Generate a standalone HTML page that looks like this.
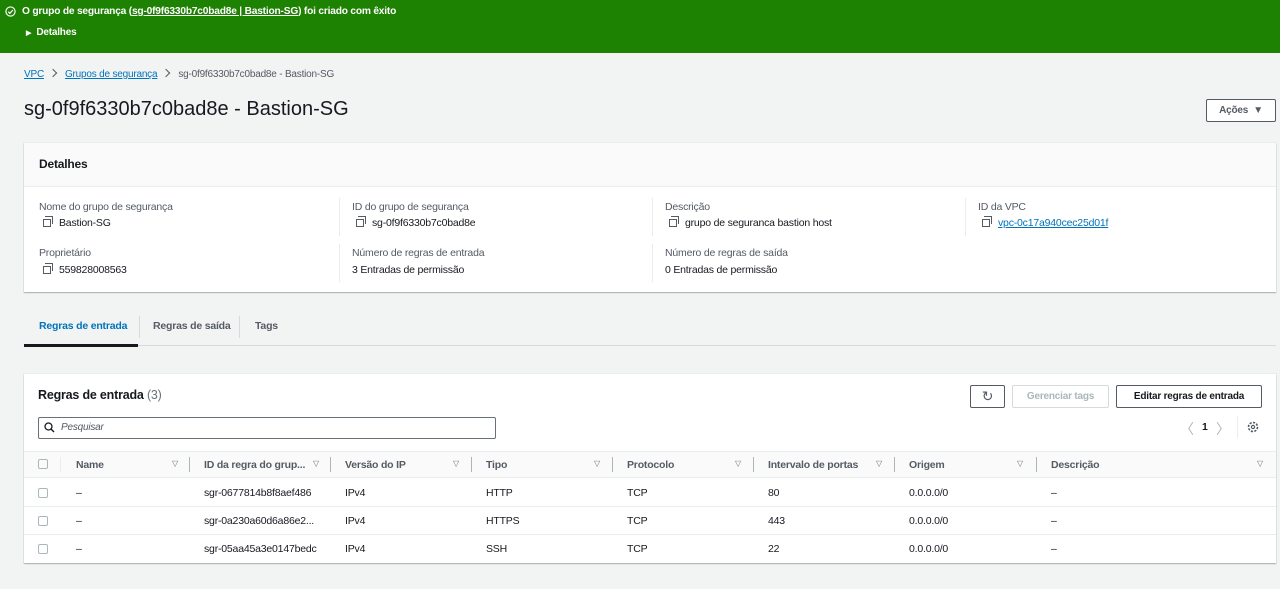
<!DOCTYPE html>
<html><head><meta charset="utf-8"><style>
*{box-sizing:border-box;margin:0;padding:0}
body{width:1280px;height:589px;background:#f2f3f3;font-family:"Liberation Sans",sans-serif;color:#16191f;font-size:10.5px;position:relative;overflow:hidden;letter-spacing:-0.2px}
.a{position:absolute;white-space:nowrap}
.banner{position:absolute;left:0;top:0;width:1280px;height:53px;background:#1d8102;color:#fff;font-weight:bold;font-size:10px}
a{color:#0073bb;text-decoration:underline}
.panel{position:absolute;background:#fff;box-shadow:0 1px 1px rgba(0,22,40,.3),0 0 0 1px #eaeded}
.lbl{color:#545b64}
.cp{display:inline-block;width:8px;height:8px;border:1.3px solid #545b64;position:relative;margin-right:8px;vertical-align:-1px}
.cp:after{content:"";position:absolute;left:1px;top:-4px;width:7px;height:7px;border-top:1.3px solid #545b64;border-right:1.3px solid #545b64}
.vsep{position:absolute;width:1px;background:#eaeded}
.btn{position:absolute;border:1px solid #545b64;background:#fff;font-weight:bold;color:#545b64;text-align:center;border-radius:2px;font-size:10px}
.cb{position:absolute;width:10px;height:10px;border:1px solid #aab7b8;border-radius:2px}
.th{position:absolute;font-weight:bold;color:#545b64;top:459px}
.tri{position:absolute;top:459px;color:#687078;font-size:8px}
.cs{position:absolute;top:457px;width:1px;height:15px;background:#aab7b8}
.row{position:absolute;left:24px;width:1252px;height:1px;background:#eaeded}
.chev{display:inline-block;width:6px;height:6px;border-top:1.3px solid #545b64;border-right:1.3px solid #545b64;transform:rotate(45deg);margin:0 9px 1px 6px}
</style></head><body>
<div class="banner">
<svg class="a" style="left:5px;top:6px" width="11" height="11" viewBox="0 0 12 12"><circle cx="6" cy="6" r="5" fill="none" stroke="#fff" stroke-width="1.3"/><path d="M3.5 6.2l1.8 1.8 3.3-3.6" fill="none" stroke="#fff" stroke-width="1.3"/></svg>
<div class="a" style="left:22px;top:6px;font-size:10.2px">O grupo de segurança (<span style="text-decoration:underline">sg-0f9f6330b7c0bad8e | Bastion-SG</span>) foi criado com êxito</div>
<div class="a" style="left:26px;top:27px"><span style="font-size:7px">▶</span>&nbsp; Detalhes</div>
</div>
<div class="a" style="left:24px;top:69px;font-size:10px"><a>VPC</a><span class="chev"></span><a>Grupos de segurança</a><span class="chev"></span><span style="color:#545b64">sg-0f9f6330b7c0bad8e - Bastion-SG</span></div>
<div class="a" style="left:24px;top:98px;font-size:20px;letter-spacing:0">sg-0f9f6330b7c0bad8e - Bastion-SG</div>
<div class="btn" style="left:1206px;top:99px;width:70px;height:23px;line-height:21px">Ações &nbsp;▼</div>

<div class="panel" style="left:24px;top:143px;width:1252px;height:149px">
<div style="height:44px;background:#fafafa;border-bottom:1px solid #eaeded"></div>
<div class="a" style="left:15px;top:14px;font-weight:bold;font-size:12px">Detalhes</div>
<div class="a lbl" style="left:15px;top:58px">Nome do grupo de segurança</div>
<div class="a" style="left:19px;top:74px"><span class="cp"></span>Bastion-SG</div>
<div class="a lbl" style="left:15px;top:104px">Proprietário</div>
<div class="a" style="left:19px;top:121px"><span class="cp"></span>559828008563</div>
<div class="vsep" style="left:315px;top:55px;height:38px"></div><div class="vsep" style="left:315px;top:101px;height:38px"></div>
<div class="a lbl" style="left:328px;top:58px">ID do grupo de segurança</div>
<div class="a" style="left:332px;top:74px"><span class="cp"></span>sg-0f9f6330b7c0bad8e</div>
<div class="a lbl" style="left:328px;top:104px">Número de regras de entrada</div>
<div class="a" style="left:328px;top:121px">3 Entradas de permissão</div>
<div class="vsep" style="left:628px;top:55px;height:38px"></div><div class="vsep" style="left:628px;top:101px;height:38px"></div>
<div class="a lbl" style="left:641px;top:58px">Descrição</div>
<div class="a" style="left:645px;top:74px"><span class="cp"></span>grupo de seguranca bastion host</div>
<div class="a lbl" style="left:641px;top:104px">Número de regras de saída</div>
<div class="a" style="left:641px;top:121px">0 Entradas de permissão</div>
<div class="vsep" style="left:941px;top:55px;height:38px"></div>
<div class="a lbl" style="left:954px;top:58px">ID da VPC</div>
<div class="a" style="left:958px;top:74px"><span class="cp"></span><a>vpc-0c17a940cec25d01f</a></div>
</div>

<div class="a" style="left:24px;top:345px;width:1252px;height:1px;background:#d5dbdb"></div>
<div class="a" style="left:24px;top:344px;width:114px;height:3px;background:#16191f"></div>
<div class="a" style="left:39px;top:320px;font-weight:bold;color:#0073bb">Regras de entrada</div>
<div class="vsep" style="left:139px;top:316px;height:22px;background:#d5dbdb"></div>
<div class="a" style="left:153px;top:320px;font-weight:bold;color:#545b64">Regras de saída</div>
<div class="vsep" style="left:239px;top:316px;height:22px;background:#d5dbdb"></div>
<div class="a" style="left:255px;top:320px;font-weight:bold;color:#545b64">Tags</div>

<div class="panel" style="left:24px;top:374px;width:1252px;height:189px"></div>
<div class="a" style="left:24px;top:451px;width:1252px;height:27px;background:#fafafa;border-top:1px solid #eaeded;border-bottom:1px solid #eaeded"></div>
<div class="a" style="left:38px;top:388px;font-weight:bold;font-size:12.5px">Regras de entrada <span style="font-weight:normal;color:#687078">(3)</span></div>
<div class="btn" style="left:970px;top:385px;width:35px;height:23px;line-height:20px;font-size:14px;font-weight:normal">↻</div>
<div class="btn" style="left:1012px;top:385px;width:97px;height:23px;line-height:21px;border-color:#d5dbdb;color:#aab7b8">Gerenciar tags</div>
<div class="btn" style="left:1116px;top:385px;width:146px;height:23px;line-height:21px;color:#16191f">Editar regras de entrada</div>
<div class="a" style="left:38px;top:417px;width:458px;height:22px;border:1px solid #687078;border-radius:2px;background:#fff"></div>
<svg class="a" style="left:44px;top:422px" width="11" height="11" viewBox="0 0 11 11"><circle cx="4.5" cy="4.5" r="3.5" fill="none" stroke="#16191f" stroke-width="1.3"/><path d="M7 7l3 3" stroke="#16191f" stroke-width="1.4"/></svg>
<div class="a" style="left:61px;top:422px;font-style:italic;color:#545b64;font-size:10px">Pesquisar</div>
<div class="a" style="left:1180px;top:419px;color:#aab7b8;font-size:14px">〈</div>
<div class="a" style="left:1202px;top:421px;font-weight:bold">1</div>
<div class="a" style="left:1216px;top:419px;color:#aab7b8;font-size:14px">〉</div>
<div class="vsep" style="left:1237px;top:416px;height:22px"></div>
<svg class="a" style="left:1247px;top:421px" width="12" height="12" viewBox="0 0 12 12"><circle cx="6" cy="6" r="4.5" fill="none" stroke="#545b64" stroke-width="1.6" stroke-dasharray="2.2 1.3"/><circle cx="6" cy="6" r="1.6" fill="none" stroke="#545b64" stroke-width="1.2"/></svg>

<div class="cb" style="left:38px;top:459px"></div>
<div class="vsep" style="left:60px;top:457px;height:15px"></div>
<div class="th" style="left:76px">Name</div><div class="tri" style="left:172px">▽</div><div class="cs" style="left:189px"></div>
<div class="th" style="left:204px">ID da regra do grup...</div><div class="tri" style="left:313px">▽</div><div class="cs" style="left:330px"></div>
<div class="th" style="left:345px">Versão do IP</div><div class="tri" style="left:453px">▽</div><div class="cs" style="left:471px"></div>
<div class="th" style="left:486px">Tipo</div><div class="tri" style="left:594px">▽</div><div class="cs" style="left:612px"></div>
<div class="th" style="left:627px">Protocolo</div><div class="tri" style="left:735px">▽</div><div class="cs" style="left:753px"></div>
<div class="th" style="left:768px">Intervalo de portas</div><div class="tri" style="left:876px">▽</div><div class="cs" style="left:894px"></div>
<div class="th" style="left:909px">Origem</div><div class="tri" style="left:1017px">▽</div><div class="cs" style="left:1036px"></div>
<div class="th" style="left:1051px">Descrição</div><div class="tri" style="left:1257px">▽</div>

<div class="cb" style="left:38px;top:488px"></div>
<div class="a" style="left:76px;top:487px">–</div><div class="a" style="left:204px;top:487px">sgr-0677814b8f8aef486</div><div class="a" style="left:345px;top:487px">IPv4</div><div class="a" style="left:486px;top:487px">HTTP</div><div class="a" style="left:627px;top:487px">TCP</div><div class="a" style="left:768px;top:487px">80</div><div class="a" style="left:909px;top:487px">0.0.0.0/0</div><div class="a" style="left:1051px;top:487px">–</div>
<div class="row" style="top:506px"></div>
<div class="cb" style="left:38px;top:516px"></div>
<div class="a" style="left:76px;top:515px">–</div><div class="a" style="left:204px;top:515px">sgr-0a230a60d6a86e2...</div><div class="a" style="left:345px;top:515px">IPv4</div><div class="a" style="left:486px;top:515px">HTTPS</div><div class="a" style="left:627px;top:515px">TCP</div><div class="a" style="left:768px;top:515px">443</div><div class="a" style="left:909px;top:515px">0.0.0.0/0</div><div class="a" style="left:1051px;top:515px">–</div>
<div class="row" style="top:534px"></div>
<div class="cb" style="left:38px;top:544px"></div>
<div class="a" style="left:76px;top:543px">–</div><div class="a" style="left:204px;top:543px">sgr-05aa45a3e0147bedc</div><div class="a" style="left:345px;top:543px">IPv4</div><div class="a" style="left:486px;top:543px">SSH</div><div class="a" style="left:627px;top:543px">TCP</div><div class="a" style="left:768px;top:543px">22</div><div class="a" style="left:909px;top:543px">0.0.0.0/0</div><div class="a" style="left:1051px;top:543px">–</div>
</body></html>
